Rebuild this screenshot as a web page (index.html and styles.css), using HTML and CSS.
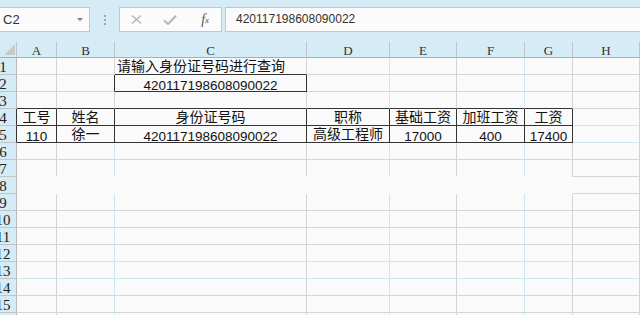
FILE: index.html
```html
<!DOCTYPE html>
<html lang="zh-CN">
<head>
    <meta charset="UTF-8">
    <title>身份证号码查询</title>
    <link rel="stylesheet" href="styles.css">
</head>
<body>
    <!-- Formula bar -->
    <div class="formula-bar">
        <div class="name-box"><span>C2</span><span class="caret"></span></div>
        <div class="grip"><i></i><i></i><i></i></div>
        <div class="fx-buttons">
            <span class="slot">
                <svg width="11" height="9" viewBox="0 0 11 9"><path d="M1 0.5 L10 8.5 M10 0.5 L1 8.5" stroke="#b6b6b6" stroke-width="1.4" fill="none"/></svg>
            </span>
            <span class="slot">
                <svg width="14" height="10" viewBox="0 0 14 10"><path d="M1 5.5 L5 9 L13 0.8" stroke="#b6b6b6" stroke-width="2" fill="none"/></svg>
            </span>
            <span class="slot fx">f<sub>x</sub></span>
        </div>
        <div class="formula-input">420117198608090022</div>
    </div>

    <!-- Worksheet -->
    <table class="sheet">
        <colgroup>
            <col class="w-rh"><col class="w-a"><col class="w-b"><col class="w-c">
            <col class="w-d"><col class="w-e"><col class="w-f"><col class="w-g"><col>
        </colgroup>
        <thead>
            <tr>
                <th class="corner"><svg width="16" height="15" viewBox="0 0 16 15"><polygon points="4,13 15,2 15,13" fill="#c9c9c9"/></svg></th>
                <th>A</th><th>B</th><th>C</th><th>D</th><th>E</th><th>F</th><th>G</th><th>H</th>
            </tr>
        </thead>
        <tbody>
            <tr>
                <th class="rh"><span>1</span></th>
                <td></td><td></td>
                <td class="zh left bd-b">请输入身份证号码进行查询</td>
                <td class="gl-r"></td><td></td><td class="gl-r"></td><td></td><td></td>
            </tr>
            <tr>
                <th class="rh"><span>2</span></th>
                <td></td><td class="bd-r"></td>
                <td class="bd-r bd-b">420117198608090022</td>
                <td class="gl-r"></td><td></td><td class="gl-r"></td><td></td><td></td>
            </tr>
            <tr>
                <th class="rh"><span>3</span></th>
                <td class="bd-b"></td><td class="bd-b"></td><td class="bd-b"></td>
                <td class="bd-b gl-r"></td><td class="bd-b"></td><td class="bd-b gl-r"></td><td class="bd-b"></td><td></td>
            </tr>
            <tr>
                <th class="rh bd-r"><span>4</span></th>
                <td class="zh bd-r bd-b">工号</td>
                <td class="zh bd-r bd-b">姓名</td>
                <td class="zh bd-r bd-b">身份证号码</td>
                <td class="zh bd-r bd-b">职称</td>
                <td class="zh bd-r bd-b">基础工资</td>
                <td class="zh bd-r bd-b">加班工资</td>
                <td class="zh bd-r bd-b">工资</td>
                <td class="gl-b"></td>
            </tr>
            <tr>
                <th class="rh bd-r"><span>5</span></th>
                <td class="bd-r bd-b">110</td>
                <td class="zh bd-r bd-b">徐一</td>
                <td class="bd-r bd-b">420117198608090022</td>
                <td class="zh bd-r bd-b">高级工程师</td>
                <td class="bd-r bd-b">17000</td>
                <td class="bd-r bd-b">400</td>
                <td class="bd-r bd-b">17400</td>
                <td class="gl-b"></td>
            </tr>
            <tr>
                <th class="rh"><span>6</span></th>
                <td></td><td class="gl-r"></td><td></td><td class="gl-r"></td><td></td><td class="gl-r"></td><td></td><td></td>
            </tr>
            <tr>
                <th class="rh"><span>7</span></th>
                <td class="no-b"></td><td class="no-b gl-r"></td><td class="no-b"></td><td class="no-b gl-r"></td>
                <td class="no-b"></td><td class="no-b gl-r"></td><td class="no-b"></td><td></td>
            </tr>
            <tr>
                <th class="rh"><span>8</span></th>
                <td class="no-r no-b"></td><td class="no-r no-b"></td><td class="no-r no-b"></td><td class="no-r no-b"></td>
                <td class="no-r no-b"></td><td class="no-r no-b"></td><td class="no-r no-b"></td><td></td>
            </tr>
            <tr>
                <th class="rh"><span>9</span></th>
                <td></td><td class="gl-r"></td><td></td><td class="gl-r"></td><td></td><td class="gl-r"></td><td></td><td></td>
            </tr>
            <tr>
                <th class="rh"><span>10</span></th>
                <td></td><td class="gl-r"></td><td></td><td class="gl-r"></td><td></td><td class="gl-r"></td><td></td><td></td>
            </tr>
            <tr>
                <th class="rh"><span>11</span></th>
                <td></td><td class="gl-r"></td><td></td><td class="gl-r"></td><td></td><td class="gl-r"></td><td></td><td></td>
            </tr>
            <tr>
                <th class="rh"><span>12</span></th>
                <td class="gl-b"></td><td class="gl-r gl-b"></td><td class="gl-b"></td><td class="gl-r gl-b"></td>
                <td class="gl-b"></td><td class="gl-r gl-b"></td><td class="gl-b"></td><td class="gl-b"></td>
            </tr>
            <tr>
                <th class="rh"><span>13</span></th>
                <td class="gl-b"></td><td class="gl-r gl-b"></td><td class="gl-b"></td><td class="gl-r gl-b"></td>
                <td class="gl-b"></td><td class="gl-r gl-b"></td><td class="gl-b"></td><td class="gl-b"></td>
            </tr>
            <tr>
                <th class="rh"><span>14</span></th>
                <td></td><td class="gl-r"></td><td></td><td class="gl-r"></td><td></td><td class="gl-r"></td><td></td><td></td>
            </tr>
            <tr>
                <th class="rh"><span>15</span></th>
                <td></td><td class="gl-r"></td><td></td><td class="gl-r"></td><td></td><td class="gl-r"></td><td></td><td></td>
            </tr>
            <tr>
                <th class="rh"><span>16</span></th>
                <td></td><td class="gl-r"></td><td></td><td class="gl-r"></td><td></td><td class="gl-r"></td><td></td><td></td>
            </tr>
        </tbody>
    </table>
</body>
</html>
```

FILE: styles.css
```css
* {
    box-sizing: border-box;
}
body {
    margin: 0;
    width: 640px;
    height: 315px;
    overflow: hidden;
    background: #fafafa;
    font-family: "Liberation Sans", "Noto Sans CJK SC", sans-serif;
}

/* formula bar */
.formula-bar {
    display: flex;
    align-items: flex-start;
    height: 42px;
    padding-top: 7px;
    background: #d5ebf5;
}
.name-box {
    width: 91px;
    height: 25px;
    margin-left: -1px;
    padding: 0 6px 0 3px;
    border: 1px solid #c6c6c6;
    background: #fbfbfb;
    display: flex;
    align-items: center;
    justify-content: space-between;
    font-size: 13px;
    color: #333;
}
.caret {
    border-left: 3px solid transparent;
    border-right: 3px solid transparent;
    border-top: 3px solid #808080;
}
.grip {
    width: 29px;
    height: 25px;
    display: flex;
    flex-direction: column;
    align-items: center;
    justify-content: center;
    gap: 2px;
}
.grip i {
    width: 2px;
    height: 2px;
    background: #a5a5a5;
}
.fx-buttons {
    width: 103px;
    height: 25px;
    border: 1px solid #c6c6c6;
    background: #fbfbfb;
    display: flex;
}
.slot {
    width: 34px;
    display: flex;
    align-items: center;
    justify-content: center;
}
.fx {
    font-family: "Liberation Serif", serif;
    font-style: italic;
    font-size: 14px;
    color: #555;
    padding-left: 2px;
}
.fx sub {
    font-size: 9px;
    vertical-align: -1px;
}
.formula-input {
    flex: 1;
    height: 25px;
    margin-left: 3px;
    margin-right: -1px;
    padding-left: 10px;
    border: 1px solid #c6c6c6;
    background: #fbfbfb;
    font-size: 12px;
    line-height: 23px;
    color: #333;
}

/* worksheet grid */
.sheet {
    width: 640px;
    table-layout: fixed;
    border-collapse: separate;
    border-spacing: 0;
}
.w-rh { width: 17px; }
.w-a { width: 40px; }
.w-b { width: 58px; }
.w-c { width: 192px; }
.w-d { width: 83px; }
.w-e { width: 67px; }
.w-f { width: 68px; }
.w-g { width: 48px; }

.sheet th,
.sheet td {
    padding: 0;
    border: 0;
    border-right: 1px solid #d4d4d4;
    border-bottom: 1px solid #d4d4d4;
    height: 17px;
    overflow: hidden;
    white-space: nowrap;
}
.sheet thead th {
    height: 16px;
    background: #d5ebf5;
    border-right-color: #c4c4c4;
    border-bottom-color: #a9b1a5;
    font-family: "Liberation Serif", serif;
    font-weight: normal;
    font-size: 13px;
    line-height: 13px;
    vertical-align: bottom;
    color: #333;
}
.sheet thead th.corner {
    vertical-align: top;
    line-height: 0;
    text-align: left;
}
.sheet .rh {
    background: #d5ebf5;
    border-right-color: #b9b9b9;
    border-bottom-color: #c4c4c4;
    text-align: left;
    font-family: "Liberation Serif", serif;
    font-weight: normal;
    font-size: 15px;
    line-height: 13px;
    vertical-align: bottom;
    color: #222;
}
.rh span {
    display: inline-block;
    width: 30px;
    margin-left: -12px;
    text-align: center;
}
.sheet td {
    font-size: 13.5px;
    line-height: 11px;
    vertical-align: bottom;
    text-align: center;
    color: #111;
}
.sheet td.zh {
    font-family: "Noto Sans CJK SC", sans-serif;
    font-size: 14px;
    line-height: 14px;
    vertical-align: top;
}
.sheet td.left {
    text-align: left;
    padding-left: 2px;
}

/* cell borders */
.sheet .bd-r { border-right-color: #333; }
.sheet .bd-b { border-bottom-color: #333; }
.sheet .gl-r { border-right-color: #cfe6ee; }
.sheet .gl-b { border-bottom-color: #cfe6ee; }
.sheet .no-r { border-right-color: transparent; }
.sheet .no-b { border-bottom-color: transparent; }
```
